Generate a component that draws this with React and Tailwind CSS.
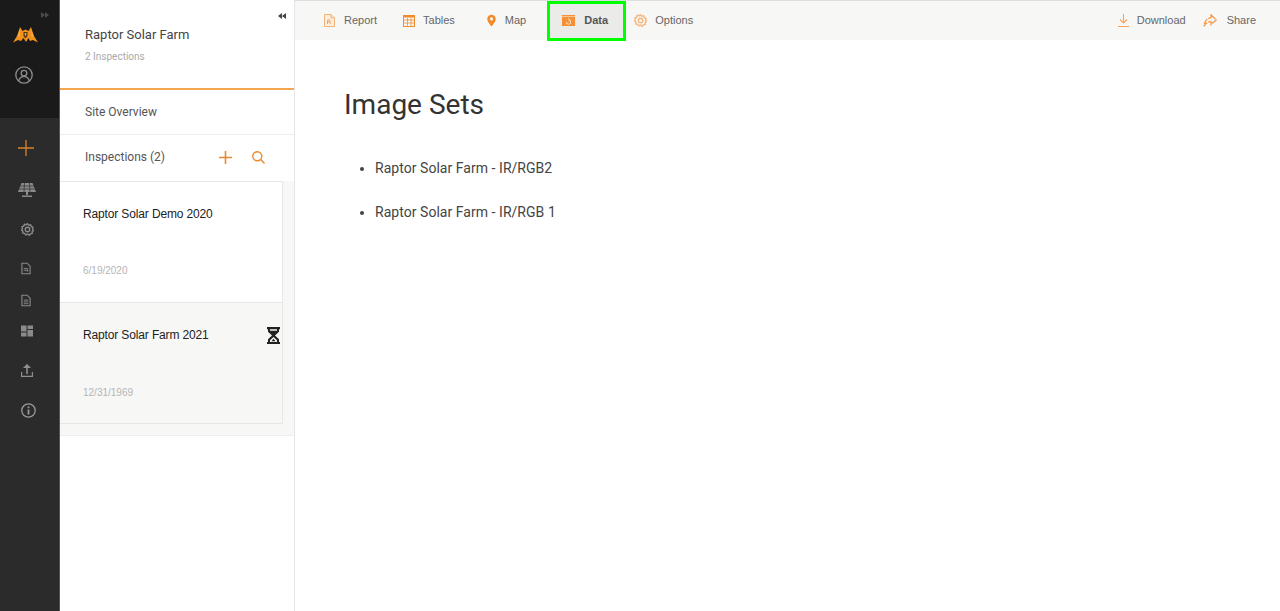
import React from "react";

function Report() {
  return (
    <svg width="11" height="13" viewBox="0 0 11 13" fill="#fdf0e2" stroke="#f7b273" strokeWidth="1">
      <path d="M.5.5h6.500l3.500 3.500v8.500H.5z" />
      <path d="M7 .5V4h3.500" fill="none" />
      <path d="M3.500 10V6h2.500v2H3.500M5.500 8l1.500 2" stroke="#f4a460" fill="none" />
    </svg>
  );
}
function TableIcon() {
  return (
    <svg width="12" height="12" viewBox="0 0 12 12" fill="none" stroke="#f28c28" strokeWidth="1">
      <rect x=".5" y=".5" width="11" height="11" />
      <path d="M.5 1.500h11" strokeWidth="2" />
      <path d="M.5 5h11M.5 8h11M4.500 3v9M8 3v9" opacity=".75" />
    </svg>
  );
}
function MapIcon() {
  return (
    <svg width="9" height="13" viewBox="0 0 10 13">
      <path fillRule="evenodd" fill="#f28c28" d="M5 0a4.700 4.700 0 0 1 4.700 4.700C9.700 8 5 13 5 13S.3 8 .3 4.700A4.700 4.700 0 0 1 5 0zm0 3a1.700 1.700 0 1 0 0 3.400A1.700 1.700 0 0 0 5 3z" />
    </svg>
  );
}
function DataIcon() {
  return (
    <svg width="13" height="11" viewBox="0 0 13 11">
      <path fill="#f78f35" d="M0 0h13v11H0z" />
      <path d="M0 1.500h13" stroke="#fcc795" strokeWidth="1" />
      <path d="M4.300 7a2.200 2.200 0 1 0 2.200-2.200M6.500 3.300l1.400 1.500-1.400 1.300" stroke="#fde0c4" strokeWidth="1" fill="none" />
    </svg>
  );
}
function Gear({ color = "#f6b67c", size = 13 }) {
  return (
    <svg width={size} height={size} viewBox="0 0 14 14" fill="none" stroke={color} strokeWidth="1.500">
      <path d="M7 .8l1.400 1.500 2-.4.6 2 1.900.7-.5 2 1.100 1.400-1.500 1.300.1 2-2 .3-1.200 1.700L7 11.900l-1.900.9-1.200-1.700-2-.3.1-2L.5 7.500 1.600 6l-.5-2L3 3.400l.6-2 2 .4z" />
      <circle cx="7" cy="7" r="2.400" />
    </svg>
  );
}
function Download() {
  return (
    <svg width="11" height="13" viewBox="0 0 11 13" fill="none" stroke="#f6a35c" strokeWidth="1.100">
      <path d="M5.500 0v9M2 5.500l3.500 3.500L9 5.500M0 12.500h11" />
    </svg>
  );
}
function ShareIcon() {
  return (
    <svg width="14" height="13" viewBox="0 0 14 13" fill="none" stroke="#f59a4c" strokeWidth="1.300">
      <path d="M8 .8l5.300 5L8 10.500V7.700C5 7.700 2.800 9 1 12.200 1.200 8 3.600 4 8 3.600z" strokeDasharray="6 1" />
    </svg>
  );
}
function Plus({ size = 15, color = "#ea8a2e", sw = 1.500 }) {
  return (
    <svg width={size} height={size} viewBox="0 0 16 16" stroke={color} strokeWidth={sw}>
      <path d="M8 0v16M0 8h16" />
    </svg>
  );
}
function Logo() {
  return (
    <svg width="25" height="17" viewBox="0 0 25 17">
      <path fill="#f0921f" d="M0 16.500 4 10 7 1l2.500 4L12.500 3.500 15.500 5 18 1l3 9 4 6.500-5-2.500-3 1-1.500-3-2.500 4-2.500-4L8 15l-3-1z" />
      <path fill="#f9b04a" d="M6.500 4 4.500 11 7 10zM18.500 4l2 7-2-1z" />
      <path fill="#5a3510" d="M10.500 6h4v4l-2 2.500-2-2.500z" />
      <path fill="#f7b25a" d="M11.800 7h1.400v2.500h-1.400z" />
    </svg>
  );
}
function User() {
  return (
    <svg width="18" height="18" viewBox="0 0 18 18" fill="none" stroke="#8d8d8d" strokeWidth="1.300">
      <circle cx="9" cy="9" r="8.200" />
      <circle cx="9" cy="7.200" r="2.800" />
      <path d="M3.800 15c.5-3 2.500-4.400 5.200-4.400S13.700 12 14.200 15" />
    </svg>
  );
}
function Solar() {
  return (
    <svg width="18" height="14" viewBox="0 0 18 14" fill="#8b8b8b">
      <path d="M3.500 0h11L18 9H0z" />
      <path d="M6.500 0 6 9M11.500 0 12 9M2 3h14M1 6h16" stroke="#2b2b2b" strokeWidth=".7" />
      <path d="M8 9h2v3H8zM4 12.500h10V14H4z" />
    </svg>
  );
}
function Doc({ lines }) {
  return (
    <svg width="10" height="13" viewBox="0 0 11 13" fill="none" stroke="#8a8a8a" strokeWidth="1.200">
      <path d="M1 .7h5.800L10 3.900v8.400H1z" />
      <path d={lines ? "M3 6h5M3 8h5M3 10h5" : "M3 6.500h4v3.500M3 8.500h5"} strokeWidth="1" />
    </svg>
  );
}
function Panels() {
  return (
    <svg width="12" height="12" viewBox="0 0 12 11" fill="#8a8a8a">
      <path d="M0 0h5.500v6H0zM6.500 0H12v3.500H6.500zM0 7h5.500v4H0zM6.500 4.500H12V11H6.500z" />
    </svg>
  );
}
function Upload() {
  return (
    <svg width="12" height="13" viewBox="0 0 12 13" fill="none" stroke="#8f8f8f" strokeWidth="1.200">
      <path d="M.6 8v4.400h10.800V8" />
      <path d="M6 10V2.500" strokeWidth="1.600" />
      <path d="M3.400 3.500 6 .8l2.600 2.700z" fill="#8f8f8f" />
    </svg>
  );
}
function Info() {
  return (
    <svg width="15" height="15" viewBox="0 0 15 15" fill="none" stroke="#9a9a9a" strokeWidth="1.300">
      <circle cx="7.500" cy="7.500" r="6.700" />
      <path d="M7.500 6.500V11.500" strokeWidth="1.800" />
      <path d="M7.500 3.500V5.200" strokeWidth="1.800" />
    </svg>
  );
}
function Hourglass() {
  return (
    <svg width="13" height="17" viewBox="0 0 13 16" preserveAspectRatio="none">
      <path fill="#222" d="M0 0h13v2h-1v2.500L8 8l4 3.500V14h1v2H0v-2h1v-2.500L5 8 1 4.500V2H0z" />
      <path fill="#f5f5f3" d="M3 2h7v1.500H3zM6.500 9.500 3 12.500V14h7v-1.500z" />
      <path fill="#222" d="M4.500 13.500 6.500 11l2 2.500z" />
    </svg>
  );
}
function Search() {
  return (
    <svg width="13" height="13" viewBox="0 0 13 13" fill="none" stroke="#ea8a2e" strokeWidth="1.400">
      <circle cx="5.300" cy="5.300" r="4.500" />
      <path d="M8.600 8.600 12.500 12.500" />
    </svg>
  );
}
function Chevrons({ dir, color }) {
  return (
    <svg width="8" height="6" viewBox="0 0 8 6" fill={color}>
      <path d={dir === "right" ? "M0 0l4 3-4 3zM4 0l4 3-4 3z" : "M8 0L4 3l4 3zM4 0L0 3l4 3z"} />
    </svg>
  );
}

function Card({ title, date, shaded, badge, dateClass }) {
  return (
    <div className={`relative h-[121px] pl-[23px] border-b border-[#e6e6e4] font-['Liberation_Sans',sans-serif] ${shaded ? "bg-[#f7f7f5]" : "bg-white"}`}>
      <div className="pt-[24px] text-[12px] leading-[16px] tracking-[-0.14px] text-[#222]">{title}</div>
      <div className={`absolute left-[23px] text-[10px] leading-[14px] text-[#b5b5b5] ${dateClass}`}>{date}</div>
      {badge && <div className="absolute right-[2px] top-[24px]">{badge}</div>}
    </div>
  );
}

export default function App() {
  return (
    <div className="flex h-[611px] w-[1280px] overflow-hidden bg-white font-['Roboto',sans-serif]">
      <aside className="flex w-[60px] shrink-0 flex-col bg-[#2b2b2b] border-r border-[#555]">
        <div className="relative flex h-[118px] flex-col items-start bg-[#1a1a1a]">
          <span className="absolute left-[41px] top-[12px] flex"><Chevrons dir="right" color="#4a4a4a" /></span>
          <div className="ml-[13px] mt-[26px] flex"><Logo /></div>
          <div className="ml-[15px] mt-[23px] flex"><User /></div>
        </div>
        <div className="flex flex-col items-start">
          <div className="ml-[18px] mt-[22px] flex"><Plus size={16} color="#d9822b" sw={1.300} /></div>
          <div className="ml-[18px] mt-[27px] flex"><Solar /></div>
          <div className="ml-[21px] mt-[26px] flex"><Gear color="#8a8a8a" size={13} /></div>
          <div className="ml-[21px] mt-[26px] flex"><Doc /></div>
          <div className="ml-[21px] mt-[19px] flex"><Doc lines /></div>
          <div className="ml-[21px] mt-[18px] flex"><Panels /></div>
          <div className="ml-[21px] mt-[27px] flex"><Upload /></div>
          <div className="ml-[21px] mt-[26px] flex"><Info /></div>
        </div>
      </aside>

      <section className="flex w-[235px] shrink-0 flex-col border-r border-[#e6e6e6]">
        <div className="relative h-[90px] border-b-2 border-[#f5a54f] pl-[25px]">
          <span className="absolute left-[218px] top-[13px] flex"><Chevrons dir="left" color="#444" /></span>
          <div className="pt-[26px] text-[13px] leading-[18px] text-[#444]">Raptor Solar Farm</div>
          <div className="mt-[6px] text-[10px] leading-[14px] text-[#aaa]">2 Inspections</div>
        </div>
        <div className="flex h-[45px] items-center border-b border-[#eee] pl-[25px] text-[12px] text-[#555]">Site Overview</div>
        <div className="flex h-[46px] items-center pb-[2px] pl-[25px] text-[12px] text-[#555]">
          <span>Inspections (2)</span>
          <div className="ml-[54px] flex"><Plus size={13} sw={2} /></div>
          <div className="ml-[20px] flex"><Search /></div>
        </div>
        <div className="border-b border-[#eee] bg-[#f7f7f5] pr-[11px] pb-[11px]">
          <div className="border-r border-t border-[#e8e8e6]">
            <Card title="Raptor Solar Demo 2020" date="6/19/2020" dateClass="bottom-[24px]" />
            <Card title="Raptor Solar Farm 2021" date="12/31/1969" dateClass="bottom-[23px]" shaded badge={<Hourglass />} />
          </div>
        </div>
      </section>

      <main className="flex min-w-0 flex-1 flex-col">
        <header className="flex h-[40px] items-center border-t border-[#ddd] bg-[#f7f7f6] pl-[29px] pr-[24px] font-['Liberation_Sans',sans-serif] text-[11px]">
          <div className="flex items-center gap-[9px] text-[#666]"><Report /><span>Report</span></div>
          <div className="ml-[26px] flex items-center gap-[8px] text-[#666]"><TableIcon /><span>Tables</span></div>
          <div className="ml-[32px] flex items-center gap-[9px] text-[#666]"><MapIcon /><span>Map</span></div>
          <div className="ml-[21px] flex h-[40px] w-[79px] items-center gap-[9px] border-[3px] border-[#00ff00] bg-[#ebebe9] pl-[12px] font-bold text-[#555]"><DataIcon /><span>Data</span></div>
          <div className="ml-[8px] flex items-center gap-[8px] text-[#666]"><Gear /><span>Options</span></div>
          <div className="ml-auto flex items-center gap-[8px] text-[#666]"><Download /><span>Download</span></div>
          <div className="ml-[17px] flex items-center gap-[10px] text-[#666]"><ShareIcon /><span>Share</span></div>
        </header>
        <div className="pl-[49px]">
          <h1 className="mt-[47px] text-[28px] leading-[36px] text-[#333]">Image Sets</h1>
          <ul className="mt-[35px] list-disc pl-[31px] text-[14px] leading-[20px] tracking-[0.04px] text-[#444]">
            <li className="mb-[24px]">Raptor Solar Farm - IR/RGB2</li>
            <li>Raptor Solar Farm - IR/RGB 1</li>
          </ul>
        </div>
      </main>
    </div>
  );
}
